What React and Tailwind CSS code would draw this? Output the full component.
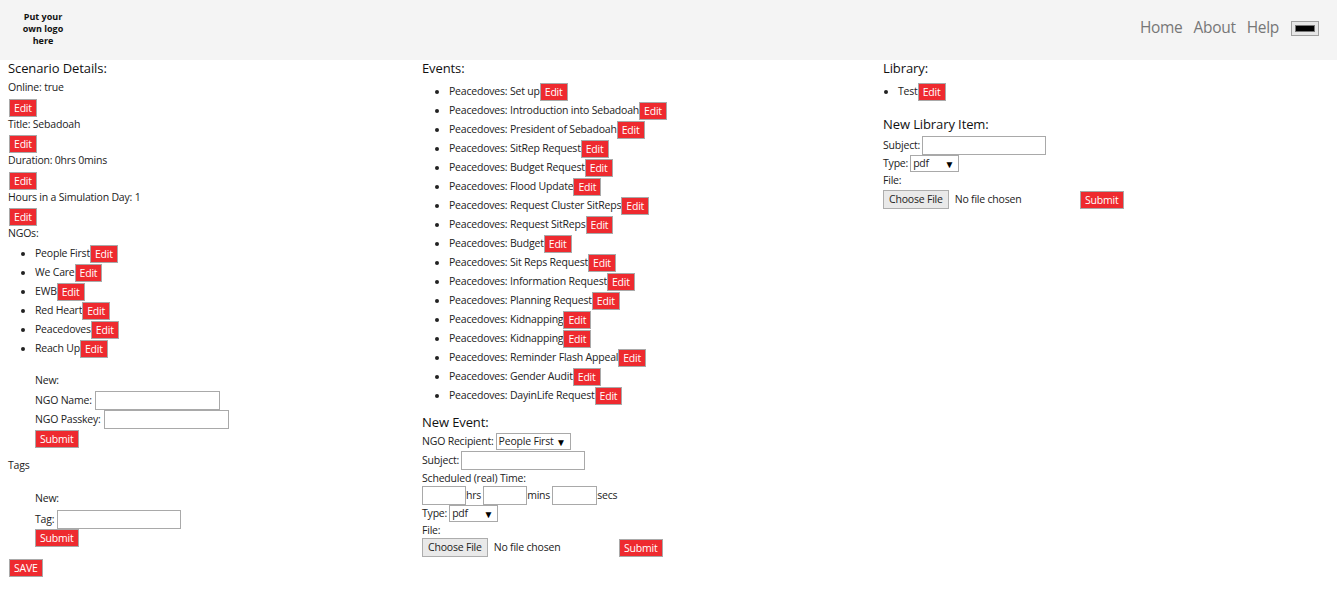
import { useState } from "react";

const ngos = ["People First", "We Care", "EWB", "Red Heart", "Peacedoves", "Reach Up"];

const events = [
  "Set up",
  "Introduction into Sebadoah",
  "President of Sebadoah",
  "SitRep Request",
  "Budget Request",
  "Flood Update",
  "Request Cluster SitReps",
  "Request SitReps",
  "Budget",
  "Sit Reps Request",
  "Information Request",
  "Planning Request",
  "Kidnapping",
  "Kidnapping",
  "Reminder Flash Appeal",
  "Gender Audit",
  "DayinLife Request",
];

// little red button used everywhere
function RedButton({ children, className = "" }) {
  return (
    <button
      className={
        "h-[18px] bg-[#ee2a2f] border border-[#a9a9a9] text-white px-[4px] leading-[16px] text-[10.5px] " +
        className
      }
    >
      {children}
    </button>
  );
}

function TextInput({ w }) {
  return <input type="text" className={"h-[19px] border border-[#a9a9a9] bg-white outline-none " + w} />;
}

function Select({ value, w }) {
  return (
    <div className={"h-[17px] border border-[#a9a9a9] bg-white flex items-center justify-between pl-[2px] pr-[4px] whitespace-nowrap overflow-hidden " + w}>
      <span>{value}</span>
      <span className="text-[10px] leading-none text-black">▼</span>
    </div>
  );
}

function FileRow() {
  return (
    <div className="flex items-center h-[19px]">
      <div className="w-[197px] flex items-center">
        <button className="h-[19px] px-[5px] border border-[#adadad] bg-[#e9e9e9] leading-[17px]">
          Choose File
        </button>
        <span className="ml-[6px]">No file chosen</span>
      </div>
      <RedButton>Submit</RedButton>
    </div>
  );
}

function Heading({ children, className = "" }) {
  return <h3 className={"text-[13px] h-[17px] leading-[17px] text-[#111] tracking-[-0.1px] " + className}>{children}</h3>;
}

function Item({ children }) {
  return (
    <li className="h-[19px] leading-[19px]">
      <span className="inline-flex items-center h-[19px] align-top">
        {children}
        <RedButton>Edit</RedButton>
      </span>
    </li>
  );
}

export default function App() {
  const [color] = useState("#000000");

  return (
    <div
      className="min-h-[603px] bg-white text-[10.5px] tracking-[-0.2px] text-[#222]"
      style={{ fontFamily: "'Open Sans', 'Noto Sans', sans-serif" }}
    >
      <header className="h-[60px] bg-[#f4f4f4] flex items-center justify-between pr-[18px] tracking-normal">
        <div className="ml-[13px] mb-[2px] w-[60px] text-center font-bold text-[9px] leading-[12px] text-[#111]">
          Put your
          <br />
          own logo
          <br />
          here
        </div>
        <nav className="flex items-center mb-[4px] text-[15.5px] tracking-[-0.3px] text-[#777]">
          <a className="mr-[11px]">Home</a>
          <a className="mr-[11px]">About</a>
          <a className="mr-[12px]">Help</a>
          <div className="w-[28px] h-[15px] border border-[#a0a0a0] bg-[#e6e6e6] p-[3px]">
            <div className="w-full h-full border border-[#777]" style={{ background: color }} />
          </div>
        </nav>
      </header>

      <main className="grid grid-cols-[414px_461px_1fr] pl-[8px]">
        {/* scenario column */}
        <section>
          <Heading>Scenario Details:</Heading>
          <p className="mt-[1px] h-[18px] leading-[18px]">Online: true</p>
          <RedButton className="mt-[3px] ml-[1px] block">Edit</RedButton>
          <p className="h-[14px] leading-[14px]">Title: Sebadoah</p>
          <RedButton className="mt-[4px] ml-[1px] block">Edit</RedButton>
          <p className="h-[14px] leading-[14px]">Duration: 0hrs 0mins</p>
          <RedButton className="mt-[5px] ml-[1px] block">Edit</RedButton>
          <p className="h-[14px] leading-[14px]">Hours in a Simulation Day: 1</p>
          <RedButton className="mt-[4px] ml-[1px] block">Edit</RedButton>
          <p className="h-[14px] leading-[14px]">NGOs:</p>
          <ul className="list-disc pl-[27px] mt-[4px]">
            {ngos.map((n) => (
              <Item key={n}>{n}</Item>
            ))}
          </ul>
          <div className="ml-[27px]">
            <p className="mt-[14px] h-[16px] leading-[16px]">New:</p>
            <div className="mt-[3px] flex items-center h-[19px]">
              <span className="mr-[3px]">NGO Name:</span>
              <TextInput w="w-[125px]" />
            </div>
            <div className="flex items-center h-[19px]">
              <span className="mr-[3px]">NGO Passkey:</span>
              <TextInput w="w-[125px]" />
            </div>
            <RedButton className="mt-[1px] block">Submit</RedButton>
          </div>
          <p className="mt-[9px] h-[16px] leading-[16px]">Tags</p>
          <div className="ml-[27px]">
            <p className="mt-[17px] h-[16px] leading-[16px]">New:</p>
            <div className="mt-[4px] flex items-center h-[19px]">
              <span className="mr-[3px]">Tag:</span>
              <TextInput w="w-[124px]" />
            </div>
            <RedButton className="block">Submit</RedButton>
          </div>
          <RedButton className="mt-[12px] ml-[1px] block">SAVE</RedButton>
        </section>

        {/* events column */}
        <section>
          <Heading>Events:</Heading>
          <ul className="list-disc pl-[27px] mt-[5px]">
            {events.map((e, i) => (
              <Item key={i}>Peacedoves: {e}</Item>
            ))}
          </ul>
          <Heading className="mt-[9px]">New Event:</Heading>
          <div className="mt-[1px] flex items-center h-[19px]">
            <span className="mr-[2px]">NGO Recipient:</span>
            <Select value="People First" w="w-[75px]" />
          </div>
          <div className="flex items-center h-[19px]">
            <span className="mr-[2px]">Subject:</span>
            <TextInput w="w-[124px]" />
          </div>
          <p className="h-[16px] leading-[16px]">Scheduled (real) Time:</p>
          <div className="flex items-center h-[19px]">
            <TextInput w="w-[44px]" />
            <span className="mr-[2px]">hrs</span>
            <TextInput w="w-[44px]" />
            <span className="mr-[2px]">mins</span>
            <TextInput w="w-[45px]" />
            <span>secs</span>
          </div>
          <div className="flex items-center h-[17px]">
            <span className="mr-[2px]">Type:</span>
            <Select value="pdf" w="w-[49px]" />
          </div>
          <p className="h-[16px] leading-[16px]">File:</p>
          <FileRow />
        </section>

        {/* library column */}
        <section>
          <Heading>Library:</Heading>
          <ul className="list-disc pl-[15px] mt-[5px]">
            <Item>Test</Item>
          </ul>
          <Heading className="mt-[15px]">New Library Item:</Heading>
          <div className="mt-[3px] flex items-center h-[19px]">
            <span className="mr-[2px]">Subject:</span>
            <TextInput w="w-[124px]" />
          </div>
          <div className="flex items-center h-[17px]">
            <span className="mr-[2px]">Type:</span>
            <Select value="pdf" w="w-[49px]" />
          </div>
          <p className="h-[16px] leading-[16px]">File:</p>
          <div className="mt-[2px]">
            <FileRow />
          </div>
        </section>
      </main>
    </div>
  );
}
